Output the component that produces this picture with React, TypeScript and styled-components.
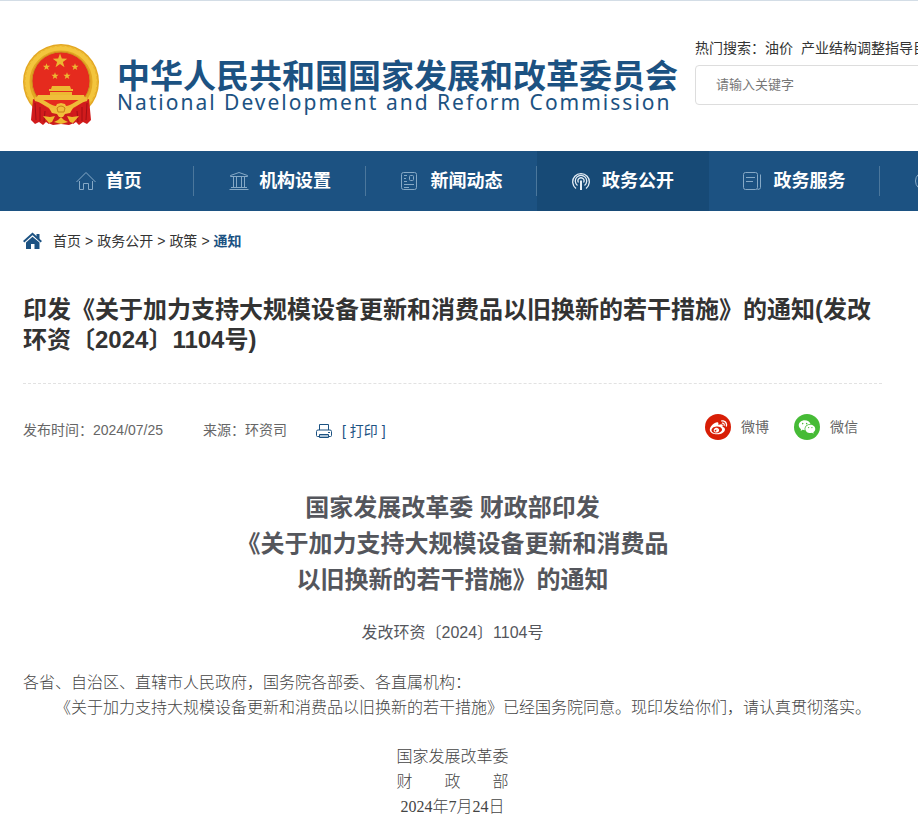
import React from "react";
import styled, { createGlobalStyle } from "styled-components";
import { RiWeiboFill, RiWechatFill } from "react-icons/ri";

const BLUE = "#1c5282";

const GlobalStyle = createGlobalStyle`
  * { box-sizing: border-box; }
  body {
    margin: 0;
    background: #fff;
    color: #333;
    font: 14px/20px "Liberation Sans", "Noto Sans CJK SC", sans-serif;
    overflow-x: hidden;
  }
  h1, h2, p { margin: 0; }
  a { color: inherit; text-decoration: none; }
`;

const Page = styled.div`
  border-top: 1px solid #d3dde6;
`;

const Header = styled.header`
  overflow: hidden;
`;

const HeaderTrack = styled.div`
  display: flex;
  align-items: flex-start;
  min-width: 1222px;
  height: 150px;
  padding-left: 22px;
`;

const Brand = styled.a`
  display: flex;
  flex: none;
  gap: 17px;
  margin-top: 42px;
  color: ${BLUE};
`;

const BrandText = styled.span`
  display: flex;
  flex-direction: column;
  padding-top: 15px;
  white-space: nowrap;
`;

const BrandName = styled.span`
  font: bold 33px/32px "Noto Sans CJK SC", sans-serif;
`;

const BrandLatin = styled.span`
  font: 21px/24px "Noto Sans", sans-serif;
  letter-spacing: 2px;
`;

const SearchForm = styled.form`
  flex: 1;
  margin: 37px 0 0 17px;
`;

const HotWords = styled.div`
  display: flex;
  gap: 8px;
  margin-bottom: 7px;
  white-space: nowrap;
`;

const SearchInput = styled.input`
  display: block;
  width: 100%;
  height: 40px;
  padding: 0 20px 2px;
  border: 1px solid #ddd;
  border-radius: 4px;
  font: 13px "Liberation Sans", "Noto Sans CJK SC", sans-serif;
  &::placeholder { color: #777; opacity: 1; }
`;

const Nav = styled.nav`
  overflow: hidden;
  background: ${BLUE};
`;

const NavTrack = styled.div`
  display: flex;
  min-width: 1223px;
  padding-left: 23px;
`;

const NavItem = styled.a<{ $active?: boolean; $divided?: boolean }>`
  display: flex;
  flex: 1;
  align-items: center;
  justify-content: center;
  gap: 10px;
  height: 60px;
  color: #fff;
  font-size: 18px;
  font-weight: bold;
  background: ${(p) =>
    p.$active
      ? "#174a76"
      : p.$divided
        ? "linear-gradient(#4b779c, #4b779c) right center / 1px 30px no-repeat"
        : "none"};
  svg { color: ${(p) => (p.$active ? "#e4edf5" : "#86a9c6")}; }
`;

const Main = styled.main`
  padding: 0 36px 20px 23px;
`;

const Crumbs = styled.nav`
  display: flex;
  align-items: center;
  gap: 4px;
  height: 60px;
  svg { margin-right: 6px; }
`;

const Current = styled.a`
  color: ${BLUE};
  font-weight: bold;
`;

const Title = styled.h1`
  margin-top: 24px;
  padding-bottom: 28px;
  border-bottom: 1px dashed #e2e2e2;
  font-size: 24px;
  line-height: 30px;
`;

const Meta = styled.div`
  display: flex;
  align-items: flex-end;
  margin-top: 30px;
  color: #666;
`;

const MetaText = styled.span<{ $gap: number }>`
  margin-right: ${(p) => p.$gap}px;
`;

const PrintButton = styled.button`
  display: flex;
  align-items: center;
  gap: 10px;
  padding: 0;
  border: 0;
  background: none;
  color: ${BLUE};
  font: inherit;
  line-height: 18px;
`;

const Shares = styled.div`
  display: flex;
  gap: 25px;
  margin-left: auto;
  padding-right: 24px;
`;

const ShareLink = styled.a`
  display: flex;
  align-items: center;
  gap: 10px;
`;

const ShareBadge = styled.span<{ $color: string }>`
  display: grid;
  place-items: center;
  width: 26px;
  height: 26px;
  border-radius: 50%;
  color: #fff;
  background: ${(p) => p.$color};
`;

const Doc = styled.article`
  margin-top: 50px;
  color: #54565c;
  text-align: center;
`;

const DocTitle = styled.h2`
  font-size: 24px;
  line-height: 36px;
`;

const DocNumber = styled.p`
  margin: 23px 0 25px;
  font-size: 16px;
  line-height: 24px;
`;

const Paragraph = styled.p<{ $indent?: boolean }>`
  color: #444;
  font: 300 16px/25px "Liberation Serif", "Noto Sans CJK SC", serif;
  text-align: left;
  text-indent: ${(p) => (p.$indent ? "2em" : "0")};
`;

const Signature = styled(Paragraph)`
  margin-top: 24px;
  text-align: center;
  white-space: pre-line;
`;

const STAR = "M0-10 2.4-3.2 9.5-3.1 3.8 1.2 5.9 8.1 0 4-5.9 8.1-3.8 1.2-9.5-3.1-2.4-3.2Z";

const Emblem = () => (
  <svg width="78" height="84" viewBox="0 0 78 84" aria-hidden="true">
    <circle cx="39" cy="39" r="38" fill="#e3a722" />
    <circle cx="39" cy="39" r="34" fill="none" stroke="#f3c53d" strokeWidth="5" />
    <circle cx="39" cy="39" r="36" fill="none" stroke="#e9b22c" strokeWidth="1" strokeDasharray="3 2" />
    <circle cx="39" cy="38" r="29" fill="#e52b1e" stroke="#cf9220" />
    <path d="M12 57H66C58 60 54 67 48 70H30C24 67 20 60 12 57Z" fill="#e52b1e" />
    <g fill="#edb832">
      <path d={STAR} transform="translate(38 18) scale(.76)" />
      <path d={STAR} transform="translate(24.500 24) scale(.38)" />
      <path d={STAR} transform="translate(53 24) scale(.38)" />
      <path d={STAR} transform="translate(33 33) scale(.38)" />
      <path d={STAR} transform="translate(45 33) scale(.38)" />
      <path d="M30 43H48L49 46H51V48H27V46H29ZM28 49H50V52H28Z" />
    </g>
    <path d="M16 52H62L64 57H13Z" fill="#f0bd3a" />
    <path d="M11 56C18 58 24 65 30 68L27 81 24 79 21 82 17 79 13 81 9 77Z" fill="#d11b1c" />
    <path d="M67 56C60 58 54 65 48 68L51 81 54 79 57 82 61 79 65 81 69 77Z" fill="#d11b1c" />
    <path d="M13 60 14 77M18 64 18 78M23 68 22 79M65 60 64 77M60 64 60 78M55 68 56 79" stroke="#a20f15" />
    <path d="M28 70H50L52 80 47 82 39 81 31 82 26 80Z" fill="#cc1b1b" />
    <path d="M13 56C21 57 27 65 34 65M65 56C57 57 51 65 44 65" fill="none" stroke="#efbb38" strokeWidth="4" />
    <path d="M27 65 33 65 35 61 39 60 43 61 45 65 51 65 48 70 43 71 41 74H37L35 71 30 70Z" fill="#f1bf3b" />
    <path d="M35 65Q39 61 43 65L42 69H36Z" fill="none" stroke="#c68018" />
    <path d="M21 73 28 74 33 73 30 79 27 80ZM57 73 50 74 45 73 48 79 51 80ZM32 79 36 77 39 74 42 77 46 79 39 81Z" fill="#eeb930" />
  </svg>
);

const NavIcon = ({ width, children }: { width: number; children: React.ReactNode }) => (
  <svg width={width} height="20" viewBox={`0 0 ${width} 20`} fill="none" stroke="currentColor" aria-hidden="true">
    {children}
  </svg>
);

const HomeOutline = () => (
  <NavIcon width={20}>
    <path d="M.5 11 10 1.500 19.500 11M3.500 10v8.500H7.500V12.500h5V18.500h4V10" />
  </NavIcon>
);

const Institution = () => (
  <NavIcon width={20}>
    <path d="M1.500 5.500V4.500L10 1.500 18.500 4.500V5.500ZM.5 18.500h19M2 16.500h16M4.500 6v10M7.500 6v10M12.500 6v10M15.500 6v10" />
  </NavIcon>
);

const Newspaper = () => (
  <NavIcon width={20}>
    <rect x=".5" y="1.500" width="15" height="17" rx="2" />
    <path d="M3 4.500h3M3 7.500h2M3 10.500h3M3 13.500h10M3 16.500h5" />
    <rect x="8.500" y="4.500" width="4" height="5" rx="1" />
  </NavIcon>
);

const Broadcast = () => (
  <NavIcon width={20}>
    <g strokeWidth="1.300">
      <path d="M4 17.500A8.300 8.300 0 1 1 14 17.500M5.500 14.500A5.700 5.700 0 1 1 12.500 14.500M6.500 11.500A3 3 0 1 1 11.500 11.500" />
      <path d="M9 9.500V19" strokeWidth="2" />
    </g>
  </NavIcon>
);

const Notebook = () => (
  <NavIcon width={20}>
    <rect x=".5" y="1.500" width="14" height="17" rx="2" />
    <path d="M3 6.500h9M3 10.500h7M17.500 3.500v13q0 2-3 2" />
  </NavIcon>
);

const Clock = () => (
  <NavIcon width={20}>
    <circle cx="9.500" cy="10" r="9" />
    <path d="M9.500 5v6h4" />
  </NavIcon>
);

const CrumbHome = () => (
  <svg width="20" height="18" viewBox="0 0 20 18" fill={BLUE} aria-hidden="true">
    <path d="M9.500 4.800 3 10.500V17H8V12H11.500V17H16.500V10.500Z" />
    <path d="M.7 9.700 9.500 1.800 18.300 9.700" fill="none" stroke={BLUE} strokeWidth="2" />
    <path d="M13.500 2H16.500V7.500L13.500 5Z" />
  </svg>
);

const Printer = () => (
  <svg width="16" height="16" viewBox="0 0 16 16" fill="none" stroke={BLUE} aria-hidden="true">
    <path d="M3.500 7V1.500h9V7M3 13.500H1.500q-1 0-1-1V8.500q0-1.500 1.500-1.500h12q1.500 0 1.500 1.500v4q0 1-1 1H13" />
    <path d="M3.500 11.500h9v3h-9z" fill="#a9c0d3" />
    <path d="M12 9.500h2" />
  </svg>
);

const navItems = [
  { label: "首页", Icon: HomeOutline, divided: true },
  { label: "机构设置", Icon: Institution, divided: true },
  { label: "新闻动态", Icon: Newspaper, divided: true },
  { label: "政务公开", Icon: Broadcast, active: true },
  { label: "政务服务", Icon: Notebook, divided: true },
  { label: "发改数据", Icon: Clock, divided: true },
  { label: "互动交流", Icon: Notebook },
];

export default function App() {
  return (
    <Page>
      <GlobalStyle />
      <Header>
        <HeaderTrack>
          <Brand href="#">
            <Emblem />
            <BrandText>
              <BrandName>中华人民共和国国家发展和改革委员会</BrandName>
              <BrandLatin>National Development and Reform Commission</BrandLatin>
            </BrandText>
          </Brand>
          <SearchForm>
            <HotWords>
              <span>热门搜索：<a href="#">油价</a></span>
              <a href="#">产业结构调整指导目录</a>
            </HotWords>
            <SearchInput type="search" aria-label="搜索" placeholder="请输入关键字" />
          </SearchForm>
        </HeaderTrack>
      </Header>
      <Nav>
        <NavTrack>
          {navItems.map(({ label, Icon, active, divided }) => (
            <NavItem key={label} href="#" $active={active} $divided={divided}>
              <Icon />
              {label}
            </NavItem>
          ))}
        </NavTrack>
      </Nav>
      <Main>
        <Crumbs>
          <CrumbHome />
          <a href="#">首页</a>
          <span>&gt;</span>
          <a href="#">政务公开</a>
          <span>&gt;</span>
          <a href="#">政策</a>
          <span>&gt;</span>
          <Current href="#">通知</Current>
        </Crumbs>
        <Title>印发《关于加力支持大规模设备更新和消费品以旧换新的若干措施》的通知(发改环资〔2024〕1104号)</Title>
        <Meta>
          <MetaText $gap={40}>发布时间：2024/07/25</MetaText>
          <MetaText $gap={29}>来源：环资司</MetaText>
          <PrintButton type="button">
            <Printer />
            [ 打印 ]
          </PrintButton>
          <Shares>
            <ShareLink href="#">
              <ShareBadge $color="#d81e06"><RiWeiboFill size={19} /></ShareBadge>
              微博
            </ShareLink>
            <ShareLink href="#">
              <ShareBadge $color="#46bb36"><RiWechatFill size={18} /></ShareBadge>
              微信
            </ShareLink>
          </Shares>
        </Meta>
        <Doc>
          <DocTitle>
            国家发展改革委 财政部印发
            <br />
            《关于加力支持大规模设备更新和消费品
            <br />
            以旧换新的若干措施》的通知
          </DocTitle>
          <DocNumber>发改环资〔2024〕1104号</DocNumber>
          <Paragraph>各省、自治区、直辖市人民政府，国务院各部委、各直属机构：</Paragraph>
          <Paragraph $indent>
            《关于加力支持大规模设备更新和消费品以旧换新的若干措施》已经国务院同意。现印发给你们，请认真贯彻落实。
          </Paragraph>
          <Signature>{"国家发展改革委\n财\u3000\u3000政\u3000\u3000部\n2024年7月24日"}</Signature>
        </Doc>
      </Main>
    </Page>
  );
}
